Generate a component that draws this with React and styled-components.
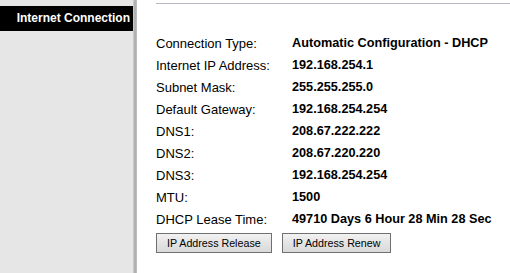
import React from "react";
import styled, { createGlobalStyle } from "styled-components";

const rows = [
  ["Connection Type:", "Automatic Configuration - DHCP"],
  ["Internet IP Address:", "192.168.254.1"],
  ["Subnet Mask:", "255.255.255.0"],
  ["Default Gateway:", "192.168.254.254"],
  ["DNS1:", "208.67.222.222"],
  ["DNS2:", "208.67.220.220"],
  ["DNS3:", "192.168.254.254"],
  ["MTU:", "1500"],
  ["DHCP Lease Time:", "49710 Days 6 Hour 28 Min 28 Sec"],
];

const App = () => (
  <Page>
    <GlobalStyle />
    <Sidebar>
      <SectionTitle>Internet Connection</SectionTitle>
    </Sidebar>
    <Shade />
    <Main>
      <Rule />
      <Info>
        {rows.map(([label, value]) => (
          <Row key={label}>
            <Label>{label}</Label>
            <Value>{value}</Value>
          </Row>
        ))}
      </Info>
      <Actions>
        <Button>IP Address Release</Button>
        <Button>IP Address Renew</Button>
      </Actions>
    </Main>
  </Page>
);

const GlobalStyle = createGlobalStyle`
  html, body {
    margin: 0;
    padding: 0;
    background: #fff;
  }
  body {
    font-family: "Liberation Sans", Arial, sans-serif;
  }
`;

const Page = styled.div`
  display: flex;
  width: 510px;
  height: 273px;
  overflow: hidden;
`;

const Sidebar = styled.div`
  width: 133px;
  flex: none;
  background: #e6e6e6;
  padding-top: 6px;
`;

/* the little bevel between the menu column and the page */
const Shade = styled.div`
  width: 4px;
  flex: none;
  background: linear-gradient(to right, #d2d2d2, #a9a9a9 50%, #c4c4c4);
`;

const SectionTitle = styled.div`
  background: #000;
  color: #fff;
  height: 25px;
  line-height: 25px;
  font-size: 12px;
  font-weight: bold;
  text-align: right;
  padding-right: 3px;
  white-space: nowrap;
`;

const Main = styled.div`
  flex: 1;
  padding-left: 19px;
`;

const Rule = styled.div`
  height: 1px;
  margin-top: 3px;
  background: #b7b7c6;
`;

const Info = styled.div`
  margin-top: 28px;
`;

const Row = styled.div`
  display: flex;
  height: 22px;
  align-items: center;
  color: #000;
`;

const Label = styled.span`
  width: 136px;
  flex: none;
  font-size: 13px;
`;

const Value = styled.span`
  font-size: 12.7px;
  font-weight: bold;
  white-space: nowrap;
`;

const Actions = styled.div`
  display: flex;
  gap: 10px;
  margin-top: 3px;
`;

const Button = styled.button`
  font-family: "Liberation Sans", Arial, sans-serif;
  font-size: 10.7px;
  color: #000;
  height: 20px;
  padding: 0 10px;
  border: 1px solid #707070;
  border-radius: 0;
  background: linear-gradient(#f2f2f2, #e4e4e4 50%, #dadada);
`;

export default App;
